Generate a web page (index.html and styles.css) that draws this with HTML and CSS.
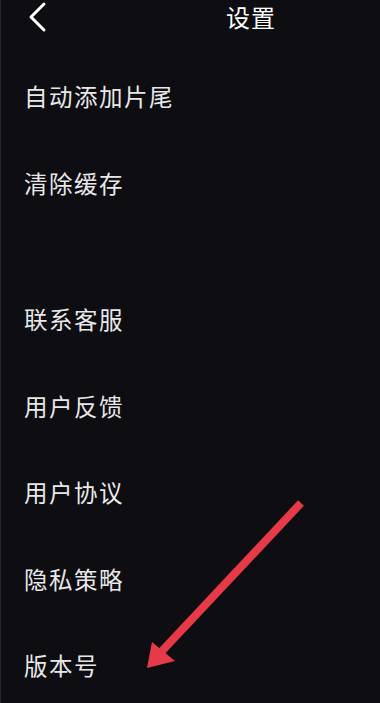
FILE: index.html
```html
<!DOCTYPE html>
<html lang="zh-CN">
  <head>
    <meta charset="UTF-8" />
    <meta name="viewport" content="width=device-width, initial-scale=1.0" />
    <title>设置</title>
    <link rel="stylesheet" href="styles.css">
  </head>
  <body>
    <div class="page">
      <div class="header">
        <button class="back">
          <svg width="24" height="34" viewBox="0 0 24 34">
            <polyline points="20,4 7,17 20,30" fill="none" stroke="#ffffff" stroke-width="3" stroke-linecap="round" stroke-linejoin="round" />
          </svg>
        </button>
        <div class="title">设置</div>
      </div>

      <div class="group">
        <div class="row">自动添加片尾</div>
        <div class="row">清除缓存</div>
      </div>

      <div class="group">
        <div class="row">联系客服</div>
        <div class="row">用户反馈</div>
        <div class="row">用户协议</div>
        <div class="row">隐私策略</div>
        <div class="row">版本号</div>
      </div>

      <!-- annotation arrow drawn over the screenshot -->
      <svg class="mark" width="380" height="703" viewBox="0 0 380 703">
        <line x1="301" y1="503" x2="162" y2="651" stroke="#e63a48" stroke-width="8" />
        <polygon points="147,668 152,642 175,661" fill="#e63a48" />
      </svg>
    </div>
  </body>
</html>
```

FILE: styles.css
```css
body {
  margin: 0;
  background-color: #0e0d12;
  font-family: "Noto Sans CJK SC", "Noto Sans", sans-serif;
  color: #e8e8ea;
}

.page {
  position: relative;
  width: 380px;
  height: 703px;
  overflow: hidden;
  border-left: 1px solid #26252b;
  box-sizing: border-box;
}

.header {
  display: flex;
  align-items: center;
  height: 34px;
  margin-bottom: 19px;
}

.back {
  background: none;
  border: none;
  padding: 0;
  margin-left: 23px;
  width: 24px;
  height: 34px;
  display: flex;
}

.title {
  margin-left: 178px;
  font-size: 24px;
  letter-spacing: 1px;
  line-height: 34px;
  color: #ffffff;
}

.group {
  display: flex;
  flex-direction: column;
}

.group + .group {
  margin-top: 50px;
}

.row {
  height: 86.5px;
  display: flex;
  align-items: center;
  padding-left: 23px;
  font-size: 23.5px;
  letter-spacing: 1.5px;
}

.mark {
  position: absolute;
  left: -1px;
  top: 0;
  pointer-events: none;
}
```
